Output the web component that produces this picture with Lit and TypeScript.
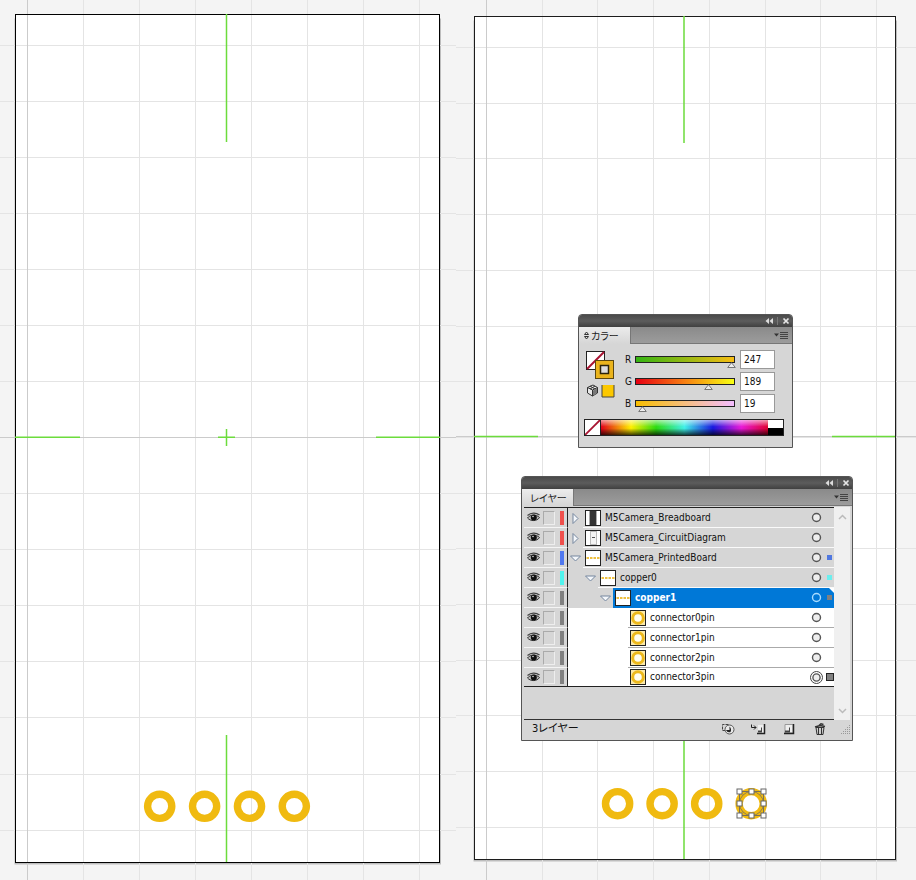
import { LitElement, html, css, svg, nothing } from "lit";
import { customElement, property } from "lit/decorators.js";
import { classMap } from "lit/directives/class-map.js";

const steps = (from: number, step: number, count: number) =>
  Array.from({ length: count }, (_, i) => Math.round(from + step * i) + 0.5);

interface Board {
  width: number;
  page: { x: number; y: number; w: number; h: number };
  columns: number[];
  rows: number[];
  axisX: number;
  axisY: number;
  marks: string;
  markWidth: number;
  pads: number[];
  padY: number;
  selected: number;
  ink: string;
}

const LEFT: Board = {
  width: 456,
  page: { x: 15.5, y: 14.5, w: 424, h: 848 },
  columns: steps(27, 56, 8),
  rows: steps(45, 56.04, 15),
  axisX: 27.5,
  axisY: 437.5,
  marks: "M226.5 14V142M226.5 735V862M15 437.2H80M376 437.2H440M218 437.2H235M226.5 429V446",
  markWidth: 1.5,
  pads: [159.7, 204.6, 249.5, 294.3],
  padY: 806.3,
  selected: -1,
  ink: "#000",
};

const RIGHT: Board = {
  width: 460,
  page: { x: 18.5, y: 16.5, w: 421, h: 843 },
  columns: steps(30, 55.7, 8),
  rows: steps(47, 55.7, 15),
  axisX: 30.5,
  axisY: 436.5,
  marks: "M228 16V143M228 732V859M18 436.5H82M376 436.5H439",
  markWidth: 1.5,
  pads: [161.6, 206.1, 250.7, 295.2],
  padY: 803.7,
  selected: 3,
  ink: "#1c1c1c",
};

@customElement("art-board")
class ArtBoard extends LitElement {
  @property({ attribute: false }) board: Board = LEFT;

  static styles = css`
    :host { display: block; }
    svg { display: block; width: 100%; height: auto; background: #f4f4f4; }
  `;

  private handles(cx: number, cy: number) {
    const at = [-12, 0, 12];
    return svg`
      <rect x=${cx - 12} y=${cy - 12} width="24" height="24" fill="none" stroke="#77715a" />
      <circle cx=${cx} cy=${cy} r="12" fill="none" stroke="#8d7f50" />
      ${at.map((dx) =>
        at.map((dy) =>
          dx || dy
            ? svg`<rect x=${cx + dx - 2.5} y=${cy + dy - 2.5} width="5" height="5" fill="#fff" stroke="#666" />`
            : nothing
        )
      )}`;
  }

  render() {
    const b = this.board;
    const p = b.page;
    return html`
      <svg viewBox="0 0 ${b.width} 880" role="img" aria-label="Artboard">
        <rect x=${p.x - 1} y=${p.y + 4} width=${p.w + 2.5} height=${p.h - 2} fill="#bdbdbd" />
        <rect x=${p.x} y=${p.y} width=${p.w} height=${p.h} fill="#fff" />
        ${b.columns.map((x) => svg`<path d="M${x} 0V880" stroke="#e4e4e4" />`)}
        ${b.rows.map((y) => svg`<path d="M0 ${y}H${b.width}" stroke="#e4e4e4" />`)}
        <path d="M${b.axisX} 0V880M0 ${b.axisY}H${b.width}" fill="none" stroke="#cbcbcb" />
        <rect x=${p.x} y=${p.y} width=${p.w} height=${p.h} fill="none" stroke=${b.ink} />
        <path d=${b.marks} fill="none" stroke="#6cdc3c" stroke-width=${b.markWidth} />
        ${b.pads.map(
          (x, i) => svg`
            <circle cx=${x} cy=${b.padY} r="12.1" fill="none" stroke="#f0ba10" stroke-width="7.4" />
            ${i === b.selected ? this.handles(751.5 - 456, 803.5) : nothing}`
        )}
      </svg>
    `;
  }
}

const shared = css`
  * { box-sizing: border-box; }
  :host {
    display: block;
    box-sizing: border-box;
    border: 1px solid #555;
    border-radius: 4px 4px 0 0;
    background: #d6d6d6;
    color: #111;
    font: 10px/20px "DejaVu Sans Condensed", "DejaVu Sans", "Noto Sans CJK JP", sans-serif;
  }
  button { padding: 0; border: 0; background: none; color: inherit; font: inherit; display: grid; place-items: center; }
  svg { display: block; }
`;

@customElement("panel-head")
class PanelHead extends LitElement {
  @property() label = "";
  @property({ type: Boolean }) cycle = false;

  static styles = css`
    :host { display: block; }
    .bar {
      display: flex; justify-content: flex-end; align-items: center; gap: 4px;
      height: 12px; padding-right: 2px; border-radius: 3px 3px 0 0;
      background: linear-gradient(#4a4a4a, #5c5c5c 50%, #404040);
    }
    .tabs {
      display: flex; justify-content: space-between; align-items: center; box-sizing: border-box;
      height: 17px; padding-right: 4px;
      background: linear-gradient(#8a8a8a, #9c9c9c); border-bottom: 1px solid #777;
    }
    button { padding: 0; border: 0; background: none; display: grid; place-items: center; }
    .tab {
      display: flex; align-items: center; gap: 2px; height: 17px; margin-bottom: -1px;
      padding: 0 11px 0 5px; background: linear-gradient(#ececec, #d6d6d6); color: #222;
      border-right: 1px solid #777;
      font: 10px/16px "Noto Sans CJK JP", sans-serif;
      font-feature-settings: "palt";
    }
    .plain { padding: 0 6px 0 8px; }
    .rule { width: 1px; height: 8px; background: #777; }
    svg { display: block; }
  `;

  render() {
    return html`
      <div class="bar">
        <button aria-label="Collapse">
          <svg width="8" height="8" viewBox="0 0 8 8"><path d="M4 1V7L0.500 4ZM8 1V7L4.500 4Z" fill="#ddd" /></svg>
        </button>
        <span class="rule"></span>
        <button aria-label="Close">
          <svg width="8" height="8" viewBox="0 0 8 8"><path d="M1.500 1.500L6.500 6.500M6.500 1.500L1.500 6.500" stroke="#e6e6e6" stroke-width="1.700" /></svg>
        </button>
      </div>
      <div class="tabs">
        <button class=${classMap({ tab: true, plain: !this.cycle })}>
          ${this.cycle
            ? html`<svg width="5" height="9" viewBox="0 0 5 9"><path d="M0.500 3.500L2.500 1L4.500 3.500ZM0.500 5.500L2.500 8L4.500 5.500Z" fill="none" stroke="#333" /></svg>`
            : nothing}
          ${this.label}
        </button>
        <button aria-label="Panel menu">
          <svg width="14" height="9" viewBox="0 0 14 9">
            <path d="M0 2.500H5L2.500 5.500Z" fill="#333" />
            <path d="M6 1.500H14M6 3.500H14M6 5.500H14M6 7.500H14" stroke="#444" />
          </svg>
        </button>
      </div>
    `;
  }
}

const CHANNELS = [
  { name: "R", value: 247, cls: "red" },
  { name: "G", value: 189, cls: "green" },
  { name: "B", value: 19, cls: "blue" },
];

@customElement("color-panel")
class ColorPanel extends LitElement {
  static styles = [
    shared,
    css`
      .body { display: grid; grid-template-columns: 32px 1fr; gap: 7px 9px; padding: 6px 8px 11px 5px; }
      .swatches { padding: 1px 0 0 2px; }
      .channels { display: grid; align-content: start; gap: 4px; padding-right: 9px; }
      .channel { display: grid; grid-template-columns: 6px 1fr 35px; align-items: start; height: 18px; }
      .channel label { line-height: 20px; }
      .slider { display: grid; padding: 6px 1px 0 0; }
      .track { height: 7px; margin: 0 4px; border: 1px solid #222; }
      .red .track { background: linear-gradient(90deg, #34b413, #f7bd13); }
      .green .track { background: linear-gradient(90deg, #e60013, #f78013 50%, #f7ff13); }
      .blue .track { background: linear-gradient(90deg, #f7bd00, #f3bdff); }
      .range { appearance: none; width: 100%; height: 6px; margin: -1px 0 0; background: none; }
      .range::-webkit-slider-thumb {
        appearance: none; width: 9px; height: 6px; border: 0;
        background: url("data:image/svg+xml,%3Csvg xmlns='http://www.w3.org/2000/svg' viewBox='0 0 9 6'%3E%3Cpath d='M4.5 .7L8.3 5.500H.7Z' fill='%23eee' stroke='%23777'/%3E%3C/svg%3E");
      }
      .value {
        width: 35px; height: 19px; padding: 0 3px; border: 1px solid #999; border-radius: 0;
        background: #fff; color: #111; font: inherit; line-height: 16px;
      }
      .spectrum { grid-column: 1 / -1; display: flex; height: 17px; border: 1px solid #222; }
      .hues {
        flex: 1;
        background:
          linear-gradient(#fff9, #fff0 45%, #0000 55%, #000b),
          linear-gradient(90deg, #e00018, #fff000 18%, #2cdc10 33%, #40f0e8 50%, #1818e0 67%, #e818d8 84%, #e00030);
      }
      .mono { width: 15px; background: linear-gradient(#fff 50%, #000 50%); }
    `,
  ];

  render() {
    return html`
      <panel-head label="カラー" cycle></panel-head>
      <div class="body">
        <div class="swatches">
          <svg width="29" height="47" viewBox="0 0 29 47" role="img" aria-label="Fill and stroke">
            <rect x="0.5" y="0.5" width="18" height="18" fill="#fff" stroke="#222" />
            <path d="M1 18L18 1" stroke="#a81432" stroke-width="2" />
            <rect x="9.500" y="9.500" width="18" height="18" fill="#ebb41c" stroke="#5c4810" />
            <rect x="14.500" y="14.500" width="8" height="8" fill="#ddd" stroke="#2c240c" stroke-width="1.500" />
            <path d="M1.500 36.500L7 34L11.500 36.500V42L6.500 45L1.500 42ZM1.500 36.500L6.500 39L11.500 36.500M6.500 39V45M4 35L9 38M9 35L4 38" fill="#e8e8e8" stroke="#333" />
            <path d="M7 39.500L11 37V42L7 44.500Z" fill="#777" />
            <rect x="16" y="34" width="12" height="12" fill="#fcc800" />
            <path d="M16 34V46H28V34" fill="none" stroke="#444" />
          </svg>
        </div>
        <div class="channels">
          ${CHANNELS.map(
            (c) => html`
              <div class=${`channel ${c.cls}`}>
                <label for=${c.name}>${c.name}</label>
                <div class="slider">
                  <span class="track"></span>
                  <input class="range" type="range" min="0" max="255" .value=${String(c.value)} aria-label=${c.name} />
                </div>
                <input class="value" id=${c.name} type="text" .value=${String(c.value)} />
              </div>
            `
          )}
        </div>
        <div class="spectrum">
          <svg width="16" height="15" viewBox="0 0 16 15">
            <rect width="16" height="15" fill="#fff" />
            <path d="M0 15L15 0" stroke="#a81432" stroke-width="1.800" /><path d="M15.500 0V15" stroke="#222" />
          </svg>
          <span class="hues"></span>
          <span class="mono"></span>
        </div>
      </div>
    `;
  }
}

type Thumb = "board" | "circuit" | "pins" | "ring";
interface Layer {
  name: string;
  depth: number;
  tint: string;
  thumb: Thumb;
  open?: boolean;
  marker?: string;
  current?: boolean;
  targeted?: boolean;
}

const LAYERS: Layer[] = [
  { name: "M5Camera_Breadboard", depth: 0, tint: "#f0504c", thumb: "board", open: false },
  { name: "M5Camera_CircuitDiagram", depth: 0, tint: "#f0504c", thumb: "circuit", open: false },
  { name: "M5Camera_PrintedBoard", depth: 0, tint: "#5078f0", thumb: "pins", open: true, marker: "#5078e0" },
  { name: "copper0", depth: 1, tint: "#50f4ee", thumb: "pins", open: true, marker: "#6ceeee" },
  { name: "copper1", depth: 2, tint: "#808080", thumb: "pins", open: true, marker: "#808080", current: true },
  { name: "connector0pin", depth: 3, tint: "#808080", thumb: "ring" },
  { name: "connector1pin", depth: 3, tint: "#808080", thumb: "ring" },
  { name: "connector2pin", depth: 3, tint: "#808080", thumb: "ring" },
  { name: "connector3pin", depth: 3, tint: "#808080", thumb: "ring", targeted: true },
];

const THUMBS = {
  board: svg`<rect x="5" y="1" width="6" height="14" fill="#333" /><path d="M4.500 1V15M11.500 1V15" stroke="#aaa" />`,
  circuit: svg`<rect x="5.500" y="1.500" width="6" height="13" fill="#f4f4f4" stroke="#bbb" /><path d="M7 7.500H10" stroke="#555" />`,
  pins: svg`<path d="M1.500 8H15" stroke="#eec040" stroke-width="2" stroke-dasharray="2.500 1" />`,
  ring: svg`<rect x="1" y="1" width="14" height="14" fill="#fbe9a8" /><circle cx="8" cy="8" r="5.300" fill="#fffdf0" stroke="#ecb81c" stroke-width="3" />`,
};

@customElement("layers-panel")
class LayersPanel extends LitElement {
  static styles = [
    shared,
    css`
      .body { display: flex; margin: 0 2px; padding-top: 1px; }
      .main { flex: 1; display: grid; grid-template-rows: auto 1fr; border-top: 1px solid #222; border-bottom: 1px solid #333; }
      .list { margin: 0; padding: 0; list-style: none; border-bottom: 1px solid #222; }
      .row { display: flex; height: 20px; }
      .row:last-child { height: 18px; }
      .switches {
        display: grid; grid-template-columns: 16px 15px 1fr; align-items: center; justify-items: center;
        width: 44px; padding-left: 1px; border-right: 1px solid #222; background: #d6d6d6;
        border-bottom: 1px solid #f4f4f4;
      }
      .lock { width: 12px; height: 14px; border: 1px solid #aaa; border-right-color: #eee; border-bottom-color: #eee; }
      .tint { width: 4px; height: 14px; }
      .indent {
        display: flex; justify-content: flex-end; align-items: center; padding-right: 2px;
        background: #d6d6d6;
      }
      .object .indent { background: #fff; }
      .d0 .indent { width: 15px; }
      .d1 .indent { width: 30px; }
      .d2 .indent { width: 45px; }
      .d3 .indent { width: 60px; }
      .item { flex: 1; display: flex; align-items: center; background: #d6d6d6; border-bottom: 1px solid #fafafa; }
      .object .item { background: #fff; border-color: #aaa; }
      .object:last-child .item, .object:last-child .switches { border-bottom: 0; }
      .current .item {
        background: linear-gradient(225deg, #fff 3px, #0078d7 4px); border-color: #0078d7; color: #fff; font-weight: bold;
      }
      .thumb { margin: 0 4px 0 2px; }
      .name { flex: 1; line-height: 18px; white-space: nowrap; }
      .marker { width: 5px; height: 5px; margin: 0 2px 0 4px; }
      .targeted .marker { width: 8px; height: 8px; border: 1px solid #222; margin: 0 0 0 3px; }
      .scroll {
        width: 16px; height: 213px; padding: 7px 0 6px; background: #f0f0f0;
        display: flex; flex-direction: column; align-items: center; justify-content: space-between;
      }
      .foot { display: flex; align-items: center; height: 20px; padding: 0 2px 2px 10px; }
      .count { flex: 1; font: 11px/18px "DejaVu Sans Condensed", "Noto Sans CJK JP", sans-serif; font-feature-settings: "palt"; }
      .tools { display: flex; gap: 15px; margin-right: 12px; }
    `,
  ];

  private row(l: Layer) {
    const cls = {
      row: true,
      [`d${l.depth}`]: true,
      object: l.thumb === "ring",
      current: !!l.current,
      targeted: !!l.targeted,
    };
    return html`
      <li class=${classMap(cls)}>
        <div class="switches">
          <button aria-label="Toggle visibility of ${l.name}">
            <svg width="13" height="11" viewBox="0 0 13 11">
              <path d="M0.500 6C3 2.500 9 2 12.500 5.500C10 9.500 3.500 9.500 0.500 6Z" fill="#bbb" stroke="#333" />
              <path d="M0.500 3.500C4 0.300 9 0.300 12.500 3" fill="none" stroke="#444" stroke-width="1.300" />
              <circle cx="6.800" cy="5.600" r="3" fill="#111" /><circle cx="6" cy="4.500" r="0.800" fill="#ddd" />
            </svg>
          </button>
          <button class="lock" aria-label="Lock ${l.name}"></button>
          <svg class="tint" width="4" height="14"><rect width="4" height="14" fill=${l.tint} /></svg>
        </div>
        <div class="indent">
          ${l.open === undefined
            ? nothing
            : html`<button aria-label="Expand ${l.name}">
                <svg width="11" height="11" viewBox="0 0 11 11">
                  <path d=${l.open ? "M0.500 3H10.500L5.500 8Z" : "M3 0.500V10.500L8 5.500Z"} fill="#f4f7fb" stroke="#74869e" />
                </svg>
              </button>`}
        </div>
        <div class="item">
          <svg class="thumb" width="16" height="16" viewBox="0 0 16 16">
            <rect x="0.5" y="0.5" width="15" height="15" fill="#fff" />
            ${THUMBS[l.thumb]}
            <rect x="0.5" y="0.5" width="15" height="15" fill="none" stroke="#222" />
          </svg>
          <span class="name">${l.name}</span>
          <button aria-label="Target ${l.name}">
            <svg width="13" height="13" viewBox="0 0 13 13">
              <circle cx="6.500" cy="6.500" r=${l.targeted ? 3.6 : 4} fill=${l.current ? "none" : "#eee"}
                stroke=${l.current ? "#a8dcff" : "#555"} stroke-width="1.400" />
              ${l.targeted ? svg`<circle cx="6.500" cy="6.500" r="6" fill="none" stroke="#444" />` : nothing}
            </svg>
          </button>
          <svg class="marker" viewBox="0 0 5 5"><rect width="5" height="5" fill=${l.targeted ? "#808080" : l.marker ?? "none"} /></svg>
        </div>
      </li>
    `;
  }

  render() {
    return html`
      <panel-head label="レイヤー"></panel-head>
      <div class="body">
        <div class="main">
          <ul class="list">${LAYERS.map((l) => this.row(l))}</ul>
        </div>
        <div class="scroll">
          <svg width="9" height="6" viewBox="0 0 9 6"><path d="M1 5L4.500 1.500L8 5" fill="none" stroke="#bbb" stroke-width="1.500" /></svg>
          <svg width="9" height="6" viewBox="0 0 9 6"><path d="M1 1L4.500 4.500L8 1" fill="none" stroke="#bbb" stroke-width="1.500" /></svg>
        </div>
      </div>
      <div class="foot">
        <span class="count">3レイヤー</span>
        <div class="tools">
          <button aria-label="Make clipping mask">
            <svg width="14" height="12" viewBox="0 0 14 12">
              <path d="M1.500 6.500V1.500H8.500" fill="none" stroke="#444" stroke-dasharray="3 1" />
              <path d="M1.500 7.500H4" stroke="#444" />
              <circle cx="8.500" cy="6.500" r="4.500" fill="#e8e8e8" stroke="#555" />
              <path d="M8.500 3.500V7H5A3.600 3.600 0 0 0 9.500 9Q11 6 8.500 3.500Z" fill="#222" />
            </svg>
          </button>
          <button aria-label="Create new sublayer">
            <svg width="16" height="12" viewBox="0 0 16 12">
              <path d="M1.500 1.500V4.500H6M4 2.500L6 4.500L4 6.500" fill="none" stroke="#222" />
              <path d="M8 2H14V10H8Z" fill="#eee" /><path d="M14.500 1V10.500H7" fill="none" stroke="#222" stroke-width="1.500" />
              <path d="M8 9.500V7.500H11V4.500H12V9.500Z" fill="#444" />
            </svg>
          </button>
          <button aria-label="Create new layer">
            <svg width="16" height="12" viewBox="0 0 16 12">
              <path d="M4 1.500H12V10H4Z" fill="#eee" stroke="#999" /><path d="M12.500 1V10.500H3" fill="none" stroke="#222" stroke-width="1.500" />
              <path d="M4 9.500V7.500H8V4.500H9V9.500Z" fill="#444" />
            </svg>
          </button>
          <button aria-label="Delete selection">
            <svg width="16" height="12" viewBox="0 0 16 12">
              <path d="M4 4.500L5 11.500H11L12 4.500Z" fill="#ccc" stroke="#333" />
              <path d="M6.500 5V11M9.500 5V11" stroke="#333" />
              <path d="M3 4L8 2.500L13 3.500M7 2.500L9 0.800L11.500 1.500" fill="none" stroke="#333" stroke-width="1.500" />
            </svg>
          </button>
        </div>
        <svg width="10" height="10" viewBox="0 0 10 10">
          <path d="M1 9.500H10M3 7.500H10M5 5.500H10M7 3.500H10M9 1.500H10" stroke="#999" stroke-dasharray="1 1" />
        </svg>
      </div>
    `;
  }
}

@customElement("app-root")
class AppRoot extends LitElement {
  static styles = css`
    :host { display: block; min-height: 100vh; background: #f4f4f4; }
    .canvas { display: grid; grid-template-columns: 456fr 460fr; align-items: start; }
    .pane { position: relative; }
    .color { position: absolute; left: 122px; top: 314px; width: 215px; }
    .layers { position: absolute; left: 65px; top: 476px; width: 332px; }
  `;

  render() {
    return html`
      <main class="canvas">
        <section class="pane"><art-board .board=${LEFT}></art-board></section>
        <section class="pane">
          <art-board .board=${RIGHT}></art-board>
          <color-panel class="color"></color-panel>
          <layers-panel class="layers"></layers-panel>
        </section>
      </main>
    `;
  }
}
